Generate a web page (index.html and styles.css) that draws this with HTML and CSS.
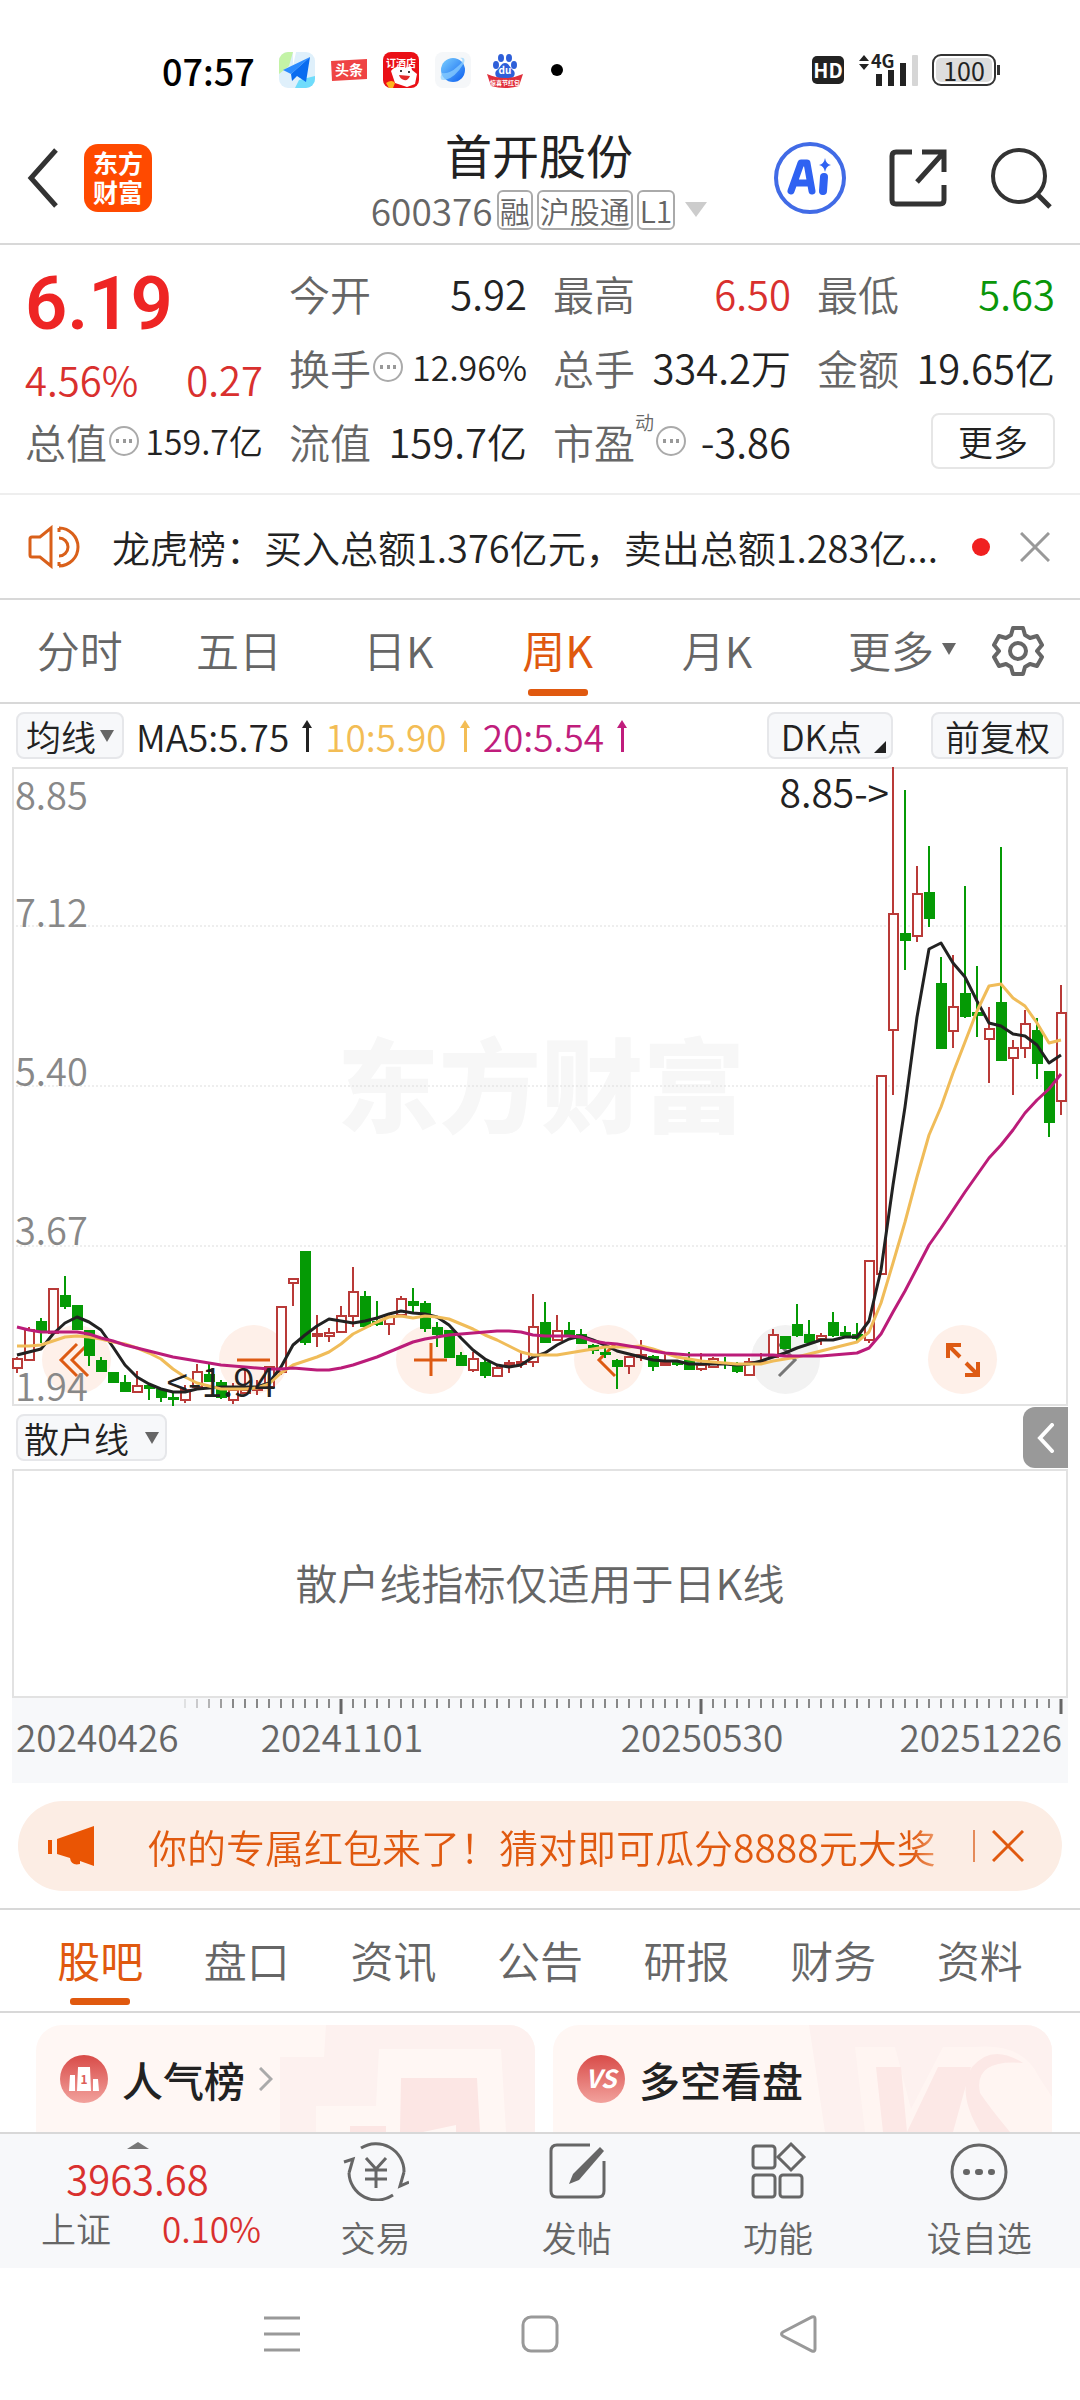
FILE: index.html
```html
<!DOCTYPE html>
<html lang="zh-CN">
<head>
<meta charset="UTF-8" />
<meta name="viewport" content="width=device-width, initial-scale=1" />
<title>首开股份 600376</title>
<link rel="stylesheet" href="styles.css">
</head>
<body>

<!-- Status bar -->
<div class="status-bar">
  <div class="status-left">
    <span class="clock">07:57</span>
    <svg class="app-icon" viewBox="0 0 36 36"><defs><clipPath id="rr"><rect width="36" height="36" rx="9"/></clipPath></defs><g clip-path="url(#rr)"><rect width="36" height="36" fill="#dff0fb"/><path d="M0 0h14l-4 14-10 8z" fill="#c3f3a6"/><path d="M14 0h3l-3 14z" fill="#fff"/><path d="M16 36l4-8 16-4v12z" fill="#6fdcfb"/></g><path d="M31 5L4 18l8 4z" fill="#2b8bff"/><path d="M31 5L12 22l1 7 5-5 9 6z" fill="#0a6cf0"/></svg>
    <svg class="app-icon" viewBox="0 0 36 36"><path d="M0 9l36-2v20L1 29z" fill="#ef4444"/><text x="18" y="23" class="icon-text" font-size="14">头条</text></svg>
    <svg class="app-icon" viewBox="0 0 36 36"><rect width="36" height="36" rx="8" fill="#ea1016"/><text x="18" y="15" class="icon-text" font-size="10">订酒店</text><path d="M8 19q4-5 10-4l4 1 6-2 1 4 5 4-2 10-8 3-12-4z" fill="#fff"/><path d="M16 23l11 1q-2 5-6 4t-5-5z" fill="#e02a2a"/><circle cx="18" cy="19" r="1"/><circle cx="26" cy="20" r="1"/><path d="M3 31q6-4 9 0l-2 5H6z" fill="#ffb41f"/></svg>
    <svg class="app-icon" viewBox="0 0 36 36"><defs><linearGradient id="globe" x1="0" y1="0" x2="1" y2="1"><stop offset="0" stop-color="#7cd0ff"/><stop offset="1" stop-color="#0a5df0"/></linearGradient></defs><rect width="36" height="36" rx="8" fill="#f5f7f9"/><circle cx="18" cy="18" r="12" fill="url(#globe)"/><path d="M7 21q-4 8 3 7 10-2 19-17 2-6-4-5 6 2-3 9-7 7-15 6z" fill="#8fd2ff" opacity=".7"/></svg>
    <svg class="app-icon" viewBox="0 0 36 36"><g fill="#2e5fd9"><ellipse cx="9" cy="13" rx="3" ry="4"/><ellipse cx="14" cy="6" rx="3" ry="4"/><ellipse cx="22" cy="6" rx="3" ry="4"/><ellipse cx="27" cy="13" rx="3" ry="4"/><path d="M18 11c4 0 5 5 8 7s2 8-3 8H13c-5 0-6-6-3-8s4-7 8-7z"/></g><text x="18" y="22" class="icon-text" font-size="10">du</text><path d="M0 22q18 8 36 0l-4 12q-14 4-28 0z" fill="#e0303c"/><text x="18" y="33" class="icon-text" font-size="6">惊喜节红包</text></svg>
    <span class="more-dot"></span>
  </div>
  <div class="status-right">
    <span class="hd">HD</span>
    <svg class="signal" width="60" height="36" viewBox="0 0 60 36"><path d="M6 3l5 6H1zM6 18l5-6H1z" fill="#222"/><text x="13" y="16" font-size="18" font-weight="700" fill="#222">4G</text><g fill="#222"><rect x="18" y="22" width="6" height="12"/><rect x="30" y="18" width="6" height="16"/><rect x="42" y="11" width="6" height="23"/></g><rect x="54" y="3" width="6" height="31" rx="1" fill="#d6d6d6"/></svg>
    <span class="battery">100</span>
  </div>
</div>

<!-- Title bar -->
<header class="title-bar">
  <div class="title-left">
    <button class="icon-btn" aria-label="返回"><svg width="34" height="62" viewBox="0 0 34 62"><path d="M30 3L5 31l25 28" fill="none" stroke="#333" stroke-width="5"/></svg></button>
    <a class="brand" href="#">东方<br>财富</a>
  </div>
  <div class="title-center">
    <h1>首开股份</h1>
    <div class="code-row">
      <span>600376</span><span class="tag">融</span><span class="tag">沪股通</span><span class="tag">L1</span>
      <svg class="code-arrow" width="22" height="15" viewBox="0 0 22 15"><path d="M0 0h22L11 15z" fill="#ccc"/></svg>
    </div>
  </div>
  <div class="title-right">
    <button class="icon-btn" aria-label="AI"><svg width="72" height="74" viewBox="0 0 72 74"><circle cx="36" cy="37" r="34" fill="none" stroke="#416be6" stroke-width="4"/><path d="M17 50l10-28h6l5 28M21 42h14" fill="none" stroke="#2f62f2" stroke-width="7" stroke-linecap="round" stroke-linejoin="round"/><path d="M50 36l-1 14" stroke="#2f62f2" stroke-width="8" stroke-linecap="round"/><path d="M51 17q1 6 6 7-5 1-6 7-1-6-6-7 5-1 6-7z" fill="#2f62f2"/></svg></button>
    <button class="icon-btn" aria-label="分享"><svg width="60" height="62" viewBox="0 0 60 62"><path d="M24 5H8q-4 0-4 4v44q0 4 4 4h44q4 0 4-4V38M34 5h22v20M56 5L29 35" fill="none" stroke="#333" stroke-width="5"/></svg></button>
    <button class="icon-btn" aria-label="搜索"><svg width="62" height="62" viewBox="0 0 62 62"><circle cx="29" cy="29" r="26" fill="none" stroke="#333" stroke-width="4"/><path d="M47 47l13 13" stroke="#333" stroke-width="5"/></svg></button>
  </div>
</header>

<!-- Quote -->
<section class="quote">
  <div class="price">
    <div class="price-now">6.19</div>
    <div class="price-change"><span>4.56%</span><span>0.27</span></div>
  </div>
  <div class="cell"><span>今开</span><b>5.92</b></div>
  <div class="cell"><span>最高</span><b class="up">6.50</b></div>
  <div class="cell"><span>最低</span><b class="down">5.63</b></div>
  <div class="cell"><span>换手</span><i class="info"></i><b class="small">12.96%</b></div>
  <div class="cell"><span>总手</span><b>334.2万</b></div>
  <div class="cell"><span>金额</span><b>19.65亿</b></div>
  <div class="cell"><span>总值</span><i class="info"></i><b class="small">159.7亿</b></div>
  <div class="cell"><span>流值</span><b>159.7亿</b></div>
  <div class="cell"><span>市盈</span><sup>动</sup><i class="info"></i><b>-3.86</b></div>
  <div class="cell"><button class="more-btn">更多</button></div>
</section>

<!-- Notice -->
<div class="notice">
  <svg width="52" height="44" viewBox="0 0 52 44"><path d="M4 12h8L23 3v38l-11-9H4q-2 0-2-2V14q0-2 2-2zM31 3a19 19 0 0 1 0 38M31 13a9 9 0 0 1 0 18M31 3v4M31 37v4" fill="none" stroke="#d9601a" stroke-width="3"/></svg>
  <p>龙虎榜：买入总额1.376亿元，卖出总额1.283亿...</p>
  <span class="red-dot"></span>
  <button class="icon-btn" aria-label="关闭"><svg width="30" height="30" viewBox="0 0 30 30"><path d="M1 1l28 28M29 1L1 29" stroke="#999" stroke-width="3"/></svg></button>
</div>

<!-- Chart period -->
<nav class="tabs period">
  <button>分时</button>
  <button>五日</button>
  <button>日K</button>
  <button class="active">周K</button>
  <button>月K</button>
  <button class="more">更多<svg width="14" height="12" viewBox="0 0 14 12"><path d="M0 0h14L7 12z" fill="#666"/></svg></button>
  <button class="gear" aria-label="设置"><svg width="52" height="52" viewBox="0 0 52 52"><path d="M21 3h10l2 7 5 3 7-2 5 9-5 6 5 6-5 9-7-2-5 3-2 7H21l-2-7-5-3-7 2-5-9 5-6-5-6 5-9 7 2 5-3z" fill="none" stroke="#666" stroke-width="4" stroke-linejoin="round"/><circle cx="26" cy="26" r="8" fill="none" stroke="#666" stroke-width="4"/></svg></button>
</nav>

<!-- Moving averages -->
<div class="ma-row">
  <button class="chip">均线<svg width="14" height="12" viewBox="0 0 14 12"><path d="M0 0h14L7 12z" fill="#666"/></svg></button>
  <span class="ma5">MA5:5.75<svg width="12" height="32" viewBox="0 0 12 32"><path d="M6 0l5 8H8v24H5V8H1z" fill="currentColor"/></svg></span>
  <span class="ma10">10:5.90<svg width="12" height="32" viewBox="0 0 12 32"><path d="M6 0l5 8H8v24H5V8H1z" fill="currentColor"/></svg></span>
  <span class="ma20">20:5.54<svg width="12" height="32" viewBox="0 0 12 32"><path d="M6 0l5 8H8v24H5V8H1z" fill="currentColor"/></svg></span>
  <div class="ma-buttons">
    <button class="chip dk">DK点<svg width="12" height="12" viewBox="0 0 12 12"><path d="M12 0v12H0z" fill="#222"/></svg></button>
    <button class="chip">前复权</button>
  </div>
</div>

<!-- K line -->
<div class="kline">
  <div class="chart-tools">
    <button aria-label="最早"><svg viewBox="0 0 69 69"><path d="M35 19L19 35l16 16M46 19L30 35l16 16"/></svg></button>
    <button aria-label="缩小"><svg viewBox="0 0 69 69"><path d="M18 35h33"/></svg></button>
    <button aria-label="放大"><svg viewBox="0 0 69 69"><path d="M18 35h33M35 18v33"/></svg></button>
    <button aria-label="向左"><svg viewBox="0 0 69 69"><path d="M41 19L25 35l16 16"/></svg></button>
    <button class="off" aria-label="向右"><svg viewBox="0 0 69 69"><path d="M28 19l16 16-16 16"/></svg></button>
    <button class="full" aria-label="全屏"><svg viewBox="0 0 69 69"><path d="M20 33V20h13M20 20l12 12M50 37v13H37M50 50L38 38"/></svg></button>
  </div>
  <svg id="kline-svg" viewBox="0 0 1056 639"></svg>
</div>

<div class="sub-row">
  <button class="chip wide">散户线<svg width="14" height="12" viewBox="0 0 14 12"><path d="M0 0h14L7 12z" fill="#666"/></svg></button>
  <button class="drawer" aria-label="展开"><svg width="18" height="30" viewBox="0 0 18 30"><path d="M15 2L3 15l12 13" fill="none" stroke="#fff" stroke-width="4" stroke-linecap="round"/></svg></button>
</div>
<div class="sub-chart">散户线指标仅适用于日K线</div>
<svg id="axis-svg" class="axis" viewBox="0 0 1056 85"></svg>

<!-- Promotion -->
<div class="promo">
  <svg width="46" height="40" viewBox="0 0 46 40"><path d="M0 14h4v14H0zM9 13L46 0v40l-14-5v3q-9 2-10-6L9 28z" fill="#ea5504"/></svg>
  <p>你的专属红包来了！猜对即可瓜分8888元大奖</p>
  <button class="icon-btn promo-close" aria-label="关闭"><svg width="32" height="32" viewBox="0 0 32 32"><path d="M1 1l30 30M31 1L1 31" stroke="#e0590f" stroke-width="3"/></svg></button>
</div>

<!-- Content tabs -->
<nav class="tabs content-tabs">
  <button class="active">股吧</button>
  <button>盘口</button>
  <button>资讯</button>
  <button>公告</button>
  <button>研报</button>
  <button>财务</button>
  <button>资料</button>
</nav>

<section class="cards">
  <a class="card" href="#">
    <svg class="card-bg" viewBox="0 0 499 107"><path d="M290 0h209v107H470l-5-83H343l-3 57h-60v26h-36V32h44z" fill="#fdf1ef"/><path d="M365 53h76l3 54h-24v-7l-33 7h-23zM314 101h36v6h-36z" fill="#fce6e4"/></svg>
    <svg width="48" height="48" viewBox="0 0 48 48"><defs><linearGradient id="red" x1="0" y1="0" x2="0" y2="1"><stop offset="0" stop-color="#d84b48"/><stop offset="1" stop-color="#f2a29d"/></linearGradient></defs><circle cx="24" cy="24" r="24" fill="url(#red)"/><path d="M10 20h5v16H9zM18 12h12l1 24H17zM33 24h5l1 12h-6z" fill="#fff"/><text x="24" y="29" font-size="12" font-weight="700" fill="#dd5e59" text-anchor="middle">1</text></svg>
    <h2>人气榜</h2>
    <svg width="14" height="24" viewBox="0 0 14 24"><path d="M1 1l11 11L1 23" fill="none" stroke="#aaa" stroke-width="3"/></svg>
  </a>
  <a class="card" href="#">
    <svg class="card-bg" viewBox="0 0 499 107"><path d="M256 0h243v107H272z" fill="#fdf1ef"/><path d="M302 22h40l16 62 32-62h30q50-5 66 30l13 20v35H312z" fill="#fff5f2"/><path d="M323 42h25l6 65h-24zM385 42h33l-18 65h-46zM470 38q-50-4-43 30 10 15 30 39h-30q-24-40-8-65 20-24 51-4z" fill="#fce8e6"/></svg>
    <svg width="48" height="48" viewBox="0 0 48 48"><circle cx="24" cy="24" r="24" fill="url(#red)"/><text x="24" y="33" font-size="25" font-weight="700" font-style="italic" fill="#fff" text-anchor="middle">VS</text></svg>
    <h2>多空看盘</h2>
  </a>
</section>

<!-- Bottom bar -->
<footer class="bottom-bar">
  <div class="index">
    <svg width="22" height="7" viewBox="0 0 22 7"><path d="M11 0l11 7H0z" fill="#777"/></svg>
    <b>3963.68</b>
    <div><span>上证</span><em>0.10%</em></div>
  </div>
  <button><svg viewBox="0 0 66 60"><path d="M18 7A28 28 0 0 1 61 31M50 54A28 28 0 0 1 6 32M1 21l9-3-4 14M66 41l-9 4 4-14M23 17l10 11 10-11M33 28v19M22 29h22M22 38h22"/></svg>交易</button>
  <button><svg viewBox="0 0 66 60"><path d="M46 4H13q-6 0-6 6v40q0 6 6 6h41q6 0 6-6V20"/><path d="M56 6l4 4-25 29-10 4 4-10z" class="solid"/></svg>发帖</button>
  <button><svg viewBox="0 0 66 60"><rect x="8" y="5" width="22" height="22" rx="3"/><path d="M46 3l13 13-13 13-13-13z"/><rect x="8" y="34" width="22" height="22" rx="3"/><rect x="35" y="34" width="22" height="22" rx="3"/></svg>功能</button>
  <button><svg viewBox="0 0 66 60"><circle cx="33" cy="31" r="27"/><path d="M20 31h1M32 31h2M45 31h1" stroke-width="6" stroke-linecap="round"/></svg>设自选</button>
</footer>

<!-- System navigation -->
<div class="system-nav">
  <button aria-label="最近任务"><svg width="38" height="38" viewBox="0 0 38 38"><path d="M1 3h36M1 19h36M1 35h36"/></svg></button>
  <button aria-label="主屏幕"><svg width="38" height="38" viewBox="0 0 38 38"><rect x="2" y="2" width="34" height="34" rx="8"/></svg></button>
  <button aria-label="返回"><svg width="38" height="38" viewBox="0 0 38 38"><path d="M33 2q3-1 3 2v30q0 3-3 2L4 21q-3-2 0-4z"/></svg></button>
</div>

<script src="script.js"></script>
</body>
</html>
```
FILE: styles.css
```css
* {
  box-sizing: border-box;
}
body {
  margin: 0;
  background: #fff;
  color: #222;
  font-family: "Noto Sans CJK SC", sans-serif;
  font-weight: 350;
  font-size: 36px;
  line-height: 48px;
}
button {
  border: none;
  background: none;
  padding: 0;
  margin: 0;
  color: inherit;
  font: inherit;
  cursor: pointer;
}
a {
  color: inherit;
  text-decoration: none;
}
svg {
  display: block;
  flex: none;
}
h1, h2, p {
  margin: 0;
}
b, em, i {
  font-style: normal;
  font-weight: inherit;
}
.icon-btn {
  display: flex;
}

/* Status bar */
.status-bar {
  display: flex;
  justify-content: space-between;
  align-items: center;
  height: 118px;
  padding: 22px 84px 0 162px;
}
.status-left,
.status-right {
  display: flex;
  align-items: center;
}
.status-left {
  gap: 16px;
}
.status-right {
  gap: 14px;
}
.clock {
  font-size: 36px;
  font-weight: 500;
  color: #000;
  margin-right: 8px;
}
.app-icon {
  width: 36px;
  height: 36px;
}
.icon-text {
  fill: #fff;
  font-weight: 700;
  text-anchor: middle;
}
.more-dot {
  width: 12px;
  height: 12px;
  border-radius: 50%;
  background: #000;
  margin-left: 12px;
}
.hd {
  width: 32px;
  height: 28px;
  border-radius: 5px;
  background: #222;
  color: #fff;
  font-size: 20px;
  line-height: 28px;
  font-weight: 700;
  text-align: center;
}
.signal {
  overflow: visible;
}
.battery {
  position: relative;
  width: 64px;
  height: 32px;
  border: 2px solid #333;
  border-radius: 9px;
  background: #ddd;
  box-shadow: inset 0 0 0 2px #fff;
  font-size: 25px;
  line-height: 28px;
  font-weight: 400;
  text-align: center;
}
.battery::after {
  content: "";
  position: absolute;
  top: 9px;
  right: -6px;
  width: 3px;
  height: 10px;
  background: #333;
}

/* Title bar */
.title-bar {
  display: grid;
  grid-template-columns: 1fr auto 1fr;
  align-items: center;
  height: 127px;
  padding: 0 28px 6px 26px;
  border-bottom: 2px solid #d8d8d8;
}
.title-left,
.title-right {
  display: flex;
  align-items: center;
  gap: 24px;
}
.title-right {
  justify-content: flex-end;
  gap: 42px;
}
.brand {
  width: 68px;
  height: 68px;
  border-radius: 14px;
  background: #ff4a00;
  color: #fff;
  font-size: 25px;
  line-height: 29px;
  font-weight: 700;
  padding-top: 4px;
  text-align: center;
}
h1 {
  font-size: 47px;
  line-height: 64px;
  font-weight: 400;
  text-align: center;
}
.code-row {
  display: flex;
  align-items: center;
  gap: 4px;
  color: #666;
  font-size: 37px;
  line-height: 48px;
}
.tag {
  border: 2px solid #aaa;
  border-radius: 6px;
  font-size: 30px;
  line-height: 36px;
  padding: 0 1px;
}
.code-arrow {
  margin-left: 6px;
}

/* Quote */
.quote {
  display: grid;
  grid-template-columns: repeat(4, 1fr);
  grid-auto-rows: 74px;
  column-gap: 26px;
  padding: 11px 25px 15px;
  border-bottom: 2px solid #eee;
}
.price {
  grid-row: span 2;
  color: #ee2524;
}
.price-now {
  font-family: Roboto, sans-serif;
  font-size: 74px;
  line-height: 96px;
  font-weight: 600;
}
.price-change {
  display: flex;
  justify-content: space-between;
  font-size: 40px;
  line-height: 54px;
  color: #d9302e;
}
.cell {
  display: flex;
  align-items: center;
  font-size: 41px;
  color: #666;
  white-space: nowrap;
}
.cell b {
  margin-left: auto;
  font-size: 40px;
  color: #222;
}
.cell b.up {
  color: #d9302e;
}
.cell b.down {
  color: #0a960a;
}
.cell b.small {
  font-size: 34px;
}
.cell sup {
  align-self: flex-start;
  font-size: 19px;
  line-height: 36px;
}
.info {
  width: 30px;
  height: 30px;
  margin-left: 2px;
  border: 2px solid #aaa;
  border-radius: 50%;
  background: radial-gradient(circle, #999 2px, transparent 2px) center / 7px 26px no-repeat, radial-gradient(circle, #999 2px, transparent 2px) 3px center / 7px 26px no-repeat, radial-gradient(circle, #999 2px, transparent 2px) 16px center / 7px 26px no-repeat;
}
.more-btn {
  width: 124px;
  height: 56px;
  margin-left: auto;
  border: 2px solid #e6e6e6;
  border-radius: 8px;
  color: #222;
  font-size: 35px;
}

/* Notice */
.notice {
  display: flex;
  align-items: center;
  height: 105px;
  padding: 0 30px 0 28px;
  border-bottom: 2px solid #d8d8d8;
}
.notice p {
  flex: 1;
  padding-left: 32px;
  font-size: 38px;
  white-space: nowrap;
}
.red-dot {
  width: 18px;
  height: 18px;
  margin-right: 30px;
  border-radius: 50%;
  background: #f02020;
}

/* Tabs */
.tabs {
  display: flex;
  height: 104px;
  border-bottom: 2px solid #d8d8d8;
  color: #666;
  font-size: 43px;
}
.tabs button {
  position: relative;
  flex: 1;
  display: flex;
  align-items: center;
  justify-content: center;
  padding-bottom: 4px;
}
.tabs .active {
  color: #e0590f;
  font-weight: 400;
}
.tabs .active::after {
  content: "";
  position: absolute;
  bottom: 6px;
  width: 60px;
  height: 7px;
  border-radius: 3px;
  background: #e0590f;
}
.tabs .more {
  justify-content: flex-end;
  gap: 8px;
}
.tabs .gear {
  flex: none;
  width: 124px;
  padding-bottom: 0;
}
.content-tabs {
  height: 105px;
  padding: 0 27px;
  border-top: 2px solid #d8d8d8;
}

/* Moving averages */
.ma-row {
  display: flex;
  align-items: center;
  height: 63px;
  padding: 0 16px;
  gap: 12px;
  font-size: 37px;
}
.ma-row span {
  display: flex;
  align-items: center;
  gap: 12px;
}
.ma5 {
  color: #222;
}
.ma10 {
  color: #f3bd55;
}
.ma20 {
  color: #c01d7c;
}
.ma-buttons {
  display: flex;
  gap: 38px;
  margin-left: auto;
}
.chip {
  display: flex;
  align-items: center;
  gap: 4px;
  height: 47px;
  padding: 0 8px;
  border: 2px solid #e6e7ea;
  border-radius: 8px;
  background: #f7f8fa;
  font-size: 35px;
  line-height: 43px;
}
.chip.wide {
  gap: 16px;
  padding: 0 6px;
}
.ma-buttons .chip {
  padding: 0 12px;
}
.ma-buttons .dk {
  gap: 12px;
  padding-right: 5px;
}
.dk svg {
  align-self: flex-end;
  margin-bottom: 4px;
}

/* K line */
.kline {
  position: relative;
  margin: 0 12px;
}
#kline-svg {
  position: relative;
  width: 100%;
  pointer-events: none;
}
.chart-tools {
  position: absolute;
  left: 30px;
  right: 71px;
  bottom: 12px;
  display: flex;
  justify-content: space-between;
}
.chart-tools button {
  width: 69px;
  height: 69px;
  border-radius: 50%;
  background: #fef0e9;
}
.chart-tools path {
  fill: none;
  stroke: #dd5a13;
  stroke-width: 3;
}
.chart-tools .off {
  background: #f2f2f2;
}
.chart-tools .off path {
  stroke: #777;
}
.chart-tools .full path {
  stroke-width: 4;
}
.frame {
  fill: none;
  stroke: #e2e2e2;
  stroke-width: 2;
}
.grid-line {
  stroke: #ddd;
  stroke-dasharray: 2 2;
}
.watermark {
  fill: #f7f7f7;
  font-size: 102px;
  font-weight: 900;
  text-anchor: middle;
}
.scale {
  fill: #888;
  font-size: 38px;
}
.mark {
  fill: #222;
  font-size: 39px;
}
.rise {
  fill: #fff;
  stroke: #b93a38;
  stroke-width: 2;
}
.fall {
  fill: #059a05;
  stroke: #059a05;
  stroke-width: 2;
}
.line {
  fill: none;
  stroke-width: 3;
  stroke-linejoin: round;
}
.line5 {
  stroke: #222;
}
.line10 {
  stroke: #f0bc59;
}
.line20 {
  stroke: #bb1c79;
}

/* Lower chart */
.sub-row {
  display: flex;
  justify-content: space-between;
  align-items: center;
  height: 63px;
  padding: 0 12px 0 16px;
}
.drawer {
  display: flex;
  align-items: center;
  justify-content: center;
  width: 45px;
  height: 61px;
  border-radius: 12px 0 0 12px;
  background: #999;
}
.sub-chart {
  display: flex;
  align-items: center;
  justify-content: center;
  height: 229px;
  margin: 0 12px;
  padding-bottom: 4px;
  border: 2px solid #e2e2e2;
  color: #666;
  font-size: 42px;
}
.axis {
  width: calc(100% - 24px);
  margin: 0 12px;
  background: #f7f8fa;
}
.axis text {
  fill: #666;
  font-size: 37px;
}
.axis line {
  stroke: #888;
  stroke-width: 2;
}
.axis .major {
  stroke: #666;
  stroke-width: 3;
}

/* Promotion */
.promo {
  display: flex;
  align-items: center;
  height: 90px;
  margin: 18px 18px 17px;
  padding: 0 38px 0 30px;
  border-radius: 45px;
  background: #fcede4;
  color: #e0590f;
}
.promo p {
  flex: 1;
  padding-left: 54px;
  font-size: 39px;
  white-space: nowrap;
  background: linear-gradient(to right, #e0590f 93%, #f2b48e 97%);
  background-clip: text;
  -webkit-background-clip: text;
  color: transparent;
}
.promo-close {
  padding-left: 17px;
  border-left: 2px solid #e58b5a;
}

/* Cards */
.cards {
  display: flex;
  gap: 18px;
  height: 119px;
  padding: 12px 28px 0 36px;
  overflow: hidden;
}
.card {
  position: relative;
  flex: 1;
  display: flex;
  align-items: center;
  gap: 14px;
  height: 160px;
  padding: 0 24px 52px;
  border-radius: 26px;
  background: #fff7f4;
  overflow: hidden;
}
.card > * {
  position: relative;
}
.card .card-bg {
  position: absolute;
  top: 0;
  left: 0;
  width: 100%;
}
h2 {
  font-size: 41px;
  font-weight: 500;
  line-height: 60px;
}

/* Bottom bar */
.bottom-bar {
  display: flex;
  height: 136px;
  border-top: 2px solid #d8d8d8;
  background: #f7f8fa;
  color: #666;
  font-size: 35px;
}
.index {
  width: 275px;
  display: flex;
  flex-direction: column;
  align-items: center;
  padding-top: 8px;
}
.index b {
  color: #d9302e;
  font-size: 40px;
  line-height: 58px;
}
.index div {
  display: flex;
  align-self: stretch;
  justify-content: space-between;
  padding: 0 14px 0 41px;
  line-height: 42px;
}
.index em {
  color: #d9302e;
}
.bottom-bar button {
  flex: 1;
  display: flex;
  flex-direction: column;
  align-items: center;
  gap: 12px;
  padding-top: 7px;
}
.bottom-bar button svg {
  width: 66px;
  height: 60px;
  fill: none;
  stroke: #666;
  stroke-width: 3;
}
.bottom-bar .solid {
  fill: #666;
  stroke: none;
}

/* System navigation */
.system-nav {
  display: flex;
  justify-content: center;
  gap: 220px;
  height: 132px;
  align-items: center;
}
.system-nav svg {
  fill: none;
  stroke: #999;
  stroke-width: 3;
}
```
FILE: script.js
```js
// [high, body top, body bottom, low, rising]
const candles = [
  [590,592,601,606,1],[560,563,593,593,1],[551,555,563,576,0],[522,522,566,566,1],
  [509,529,539,542,0],[539,539,562,563,0],[564,564,588,599,0],[590,594,604,605,0],
  [605,606,615,616,0],[608,616,624,625,0],[604,619,625,625,1],[618,619,621,633,0],
  [621,623,630,635,0],[626,631,632,639,0],[618,623,633,636,1],[597,605,620,623,1],
  [596,608,614,615,0],[613,616,630,632,0],[616,623,633,637,1],[603,623,626,627,1],
  [613,620,623,628,1],[599,600,620,620,1],[540,540,605,608,1],[511,512,516,539,1],
  [484,485,575,578,0],[548,567,569,580,1],[561,566,569,575,1],[539,549,565,566,1],
  [500,525,549,560,1],[524,530,559,560,0],[534,555,557,559,0],[548,550,557,568,1],
  [529,532,548,548,1],[521,535,538,546,0],[534,537,561,565,0],[555,561,567,580,0],
  [564,564,590,591,0],[585,589,598,599,0],[585,592,603,605,1],[593,596,608,611,0],
  [599,601,609,609,1],[593,596,598,606,1],[586,595,597,601,1],[527,560,595,600,1],
  [535,556,575,576,0],[548,564,573,573,1],[555,564,568,569,0],[562,568,576,577,0],
  [577,579,583,587,0],[580,586,587,591,0],[592,594,599,622,0],[589,590,599,607,1],
  [573,588,590,594,1],[588,590,599,604,0],[587,596,598,599,1],[595,596,597,599,0],
  [585,593,602,602,0],[586,598,602,604,1],[590,592,600,600,1],[590,596,597,602,0],
  [595,600,604,606,0],[591,595,608,609,1],[586,595,596,598,1],[562,568,590,590,1],
  [569,570,581,582,0],[537,558,568,570,0],[553,568,575,576,0],[566,569,572,578,1],
  [545,556,568,570,0],[559,566,568,570,0],[556,568,571,576,0],[493,494,573,576,1],
  [309,309,507,507,1],[0,147,263,328,1],[23,167,173,203,0],[99,127,169,175,1],
  [79,126,151,160,0],[190,217,281,281,0],[188,240,264,281,1],[119,227,249,251,0],
  [199,246,248,270,0],[240,262,272,316,1],[80,236,293,293,0],[273,281,291,328,1],
  [243,257,281,291,1],[251,264,296,312,0],[304,305,355,370,0],[218,246,334,348,1]
];

const ma5 = [588,585,582,567,556,550,555,563,580,598,610,617,622,625,625,622,621,620,620,620,620,616,600,578,568,559,552,554,556,554,551,547,544,546,547,550,558,571,583,592,598,600,598,590,586,578,572,569,573,578,584,587,590,593,594,594,597,597,597,597,598,597,594,590,586,581,577,573,573,570,570,554,503,418,340,250,182,176,196,210,234,256,259,267,269,278,296,288];
const ma10 = [579,579,578,574,570,569,570,572,575,577,581,586,592,602,610,616,619,622,622,622,621,617,606,598,594,590,585,577,567,561,555,550,549,551,549,550,552,557,562,568,573,579,585,588,588,588,586,584,582,580,580,580,579,582,586,590,592,594,595,596,597,597,597,594,592,590,587,584,581,578,575,565,536,496,455,410,368,340,306,275,244,219,217,231,239,256,276,273];
const ma20 = [560,563,565,565,565,565,567,571,574,578,581,584,587,590,592,594,596,598,599,600,601,602,602,601,602,603,603,601,598,594,590,585,580,575,572,570,568,567,566,565,564,564,565,568,569,569,569,570,574,576,577,579,581,584,586,587,588,588,588,588,588,588,588,588,589,589,589,589,588,587,586,581,567,545,524,501,478,461,443,425,408,391,378,363,346,333,322,307];

const step = 12;
const x = i => 5 + i * step;

let out = '<text class="watermark" x="529" y="358">东方财富</text>';
[159, 319, 479].forEach(y => {
  out += `<line class="grid-line" x1="0" x2="1056" y1="${y}" y2="${y}"/>`;
});
out += '<rect class="frame" x="1" y="1" width="1054" height="637"/>';

candles.forEach(([high, top, bottom, low, up], i) => {
  const cls = up ? 'rise' : 'fall';
  const h = Math.max(bottom - top, 1);
  out += `<path class="${cls}" d="M${x(i)} ${high}V${top}M${x(i)} ${bottom}V${low}"/>`;
  out += `<rect class="${cls}" x="${x(i) - 4}" y="${top}" width="9" height="${h}"/>`;
});

[['line5', ma5], ['line10', ma10], ['line20', ma20]].forEach(([cls, data]) => {
  out += `<polyline class="line ${cls}" points="${data.map((y, i) => x(i) + ',' + y).join(' ')}"/>`;
});

[['8.85', 43], ['7.12', 160], ['5.40', 319], ['3.67', 478], ['1.94', 634]].forEach(([t, y]) => {
  out += `<text class="scale" x="3" y="${y}">${t}</text>`;
});
out += '<text class="mark" x="877" y="41" text-anchor="end">8.85-&gt;</text>';
out += '<text class="mark" x="264" y="630" text-anchor="end">&lt;-1.94</text>';
document.getElementById('kline-svg').innerHTML = out;

// Date axis
let axis = '';
for (let i = 14; i < candles.length; i++) {
  const major = i === 27 || i === 57 || i === 87;
  const fade = Math.min(1, (i - 13) / 5);
  axis += `<line class="${major ? 'major' : ''}" x1="${x(i)}" x2="${x(i)}" y1="1" y2="${major ? 16 : 10}" opacity="${fade}"/>`;
}
[['20240426', 4, 'start'], ['20241101', 330, 'middle'], ['20250530', 690, 'middle'], ['20251226', 1050, 'end']].forEach(([t, tx, a]) => {
  axis += `<text x="${tx}" y="54" text-anchor="${a}">${t}</text>`;
});
document.getElementById('axis-svg').innerHTML = axis;
```
